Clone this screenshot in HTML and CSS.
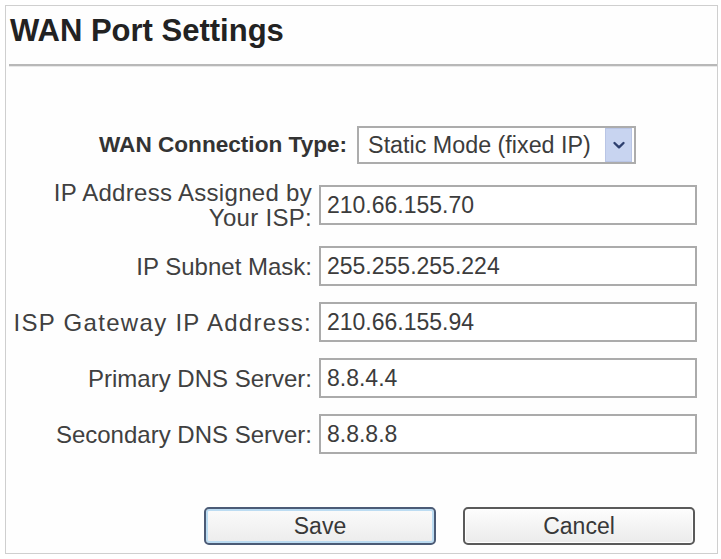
FILE: index.html
```html
<!DOCTYPE html>
<html>
<head>
<meta charset="utf-8">
<link rel="stylesheet" href="styles.css">
</head>
<body>
<div class="panel">
  <div class="header">
    <h1 class="title">WAN Port Settings</h1>
  </div>
  <div class="rule"></div>
  <div class="form">
    <div class="type-row">
      <span class="type-label">WAN Connection Type:</span>
      <div class="select">
        <span class="select-text">Static Mode (fixed IP)</span>
        <span class="select-btn">
          <svg width="14" height="9" viewBox="0 0 14 9"><path d="M2.5 2 L7 6.3 L11.5 2" fill="none" stroke="#2d3f6e" stroke-width="2.4" stroke-linecap="round" stroke-linejoin="round"/></svg>
        </span>
      </div>
    </div>
    <div class="row">
      <label class="label label-loose">IP Address Assigned by<br>Your ISP:</label>
      <input class="field" type="text" value="210.66.155.70">
    </div>
    <div class="row">
      <label class="label">IP Subnet Mask:</label>
      <input class="field" type="text" value="255.255.255.224">
    </div>
    <div class="row">
      <label class="label label-wide">ISP Gateway IP Address:</label>
      <input class="field" type="text" value="210.66.155.94">
    </div>
    <div class="row">
      <label class="label">Primary DNS Server:</label>
      <input class="field" type="text" value="8.8.4.4">
    </div>
    <div class="row">
      <label class="label">Secondary DNS Server:</label>
      <input class="field" type="text" value="8.8.8.8">
    </div>
    <div class="buttons">
      <button class="btn btn-save">Save</button>
      <button class="btn btn-cancel">Cancel</button>
    </div>
  </div>
</div>
</body>
</html>
```

FILE: styles.css
```css
html, body {
  margin: 0;
  padding: 0;
  background: #ffffff;
}
body {
  font-family: "Liberation Sans", Arial, sans-serif;
  color: #3a3a3a;
}
.panel {
  margin: 5px 0 0 5px;
  width: 711px;
  height: 547px;
  border: 1px solid #cfcfcf;
  background: #fefefe;
  box-sizing: content-box;
}
.header {
  padding: 9px 0 18px 4px;
}
.title {
  margin: 0;
  font-size: 31px;
  line-height: 31px;
  font-weight: bold;
  color: #222222;
}
.rule {
  margin-left: 3px;
  height: 2px;
  background: #b8b8b8;
  border-bottom: 1px solid #e8e8e8;
}
.form {
  padding-top: 59px;
  display: flex;
  flex-direction: column;
  gap: 16px;
}
.type-row {
  display: flex;
  align-items: center;
  gap: 10px;
  padding-left: 93px;
  height: 38px;
}
.type-label {
  font-size: 22.6px;
  font-weight: bold;
  color: #333333;
}
.select {
  width: 279px;
  height: 38px;
  box-sizing: border-box;
  border: 2px solid #acacac;
  background: #ffffff;
  display: flex;
  align-items: center;
  justify-content: space-between;
  padding: 0 2px 0 9px;
}
.select-text {
  font-size: 23.3px;
  color: #3c3c3c;
}
.select-btn {
  width: 27px;
  height: 34px;
  box-sizing: border-box;
  background: #c8d4f0;
  border: 1px solid #b9c5e5;
  display: flex;
  align-items: center;
  justify-content: center;
}
.row {
  display: flex;
  align-items: center;
  gap: 7px;
  min-height: 40px;
}
.label {
  width: 306px;
  flex: none;
  text-align: right;
  font-size: 24px;
  line-height: 25px;
  color: #404040;
}
.label-loose {
  letter-spacing: 0.3px;
}
.label-wide {
  letter-spacing: 1.3px;
}
.field {
  width: 378px;
  height: 40px;
  box-sizing: border-box;
  border: 2px solid #ababab;
  background: #ffffff;
  padding: 0 6px;
  margin: 0;
  font-family: "Liberation Sans", Arial, sans-serif;
  font-size: 23px;
  color: #3c3c3c;
  outline: none;
}
.buttons {
  display: flex;
  justify-content: flex-end;
  gap: 27px;
  padding-right: 22px;
  margin-top: 37px;
}
.btn {
  width: 232px;
  height: 38px;
  box-sizing: border-box;
  border-radius: 5px;
  font-family: "Liberation Sans", Arial, sans-serif;
  font-size: 23px;
  color: #383838;
  cursor: pointer;
  padding: 0;
}
.btn-save {
  border: 2px solid #4b5b76;
  background: linear-gradient(#fbfbfb, #ececec);
  box-shadow: inset 0 0 0 2px #bcdcf2;
}
.btn-cancel {
  border: 2px solid #5a5a5a;
  background: linear-gradient(#fdfdfd, #ebebeb);
  box-shadow: inset 0 0 0 1px #ffffff;
}
```
